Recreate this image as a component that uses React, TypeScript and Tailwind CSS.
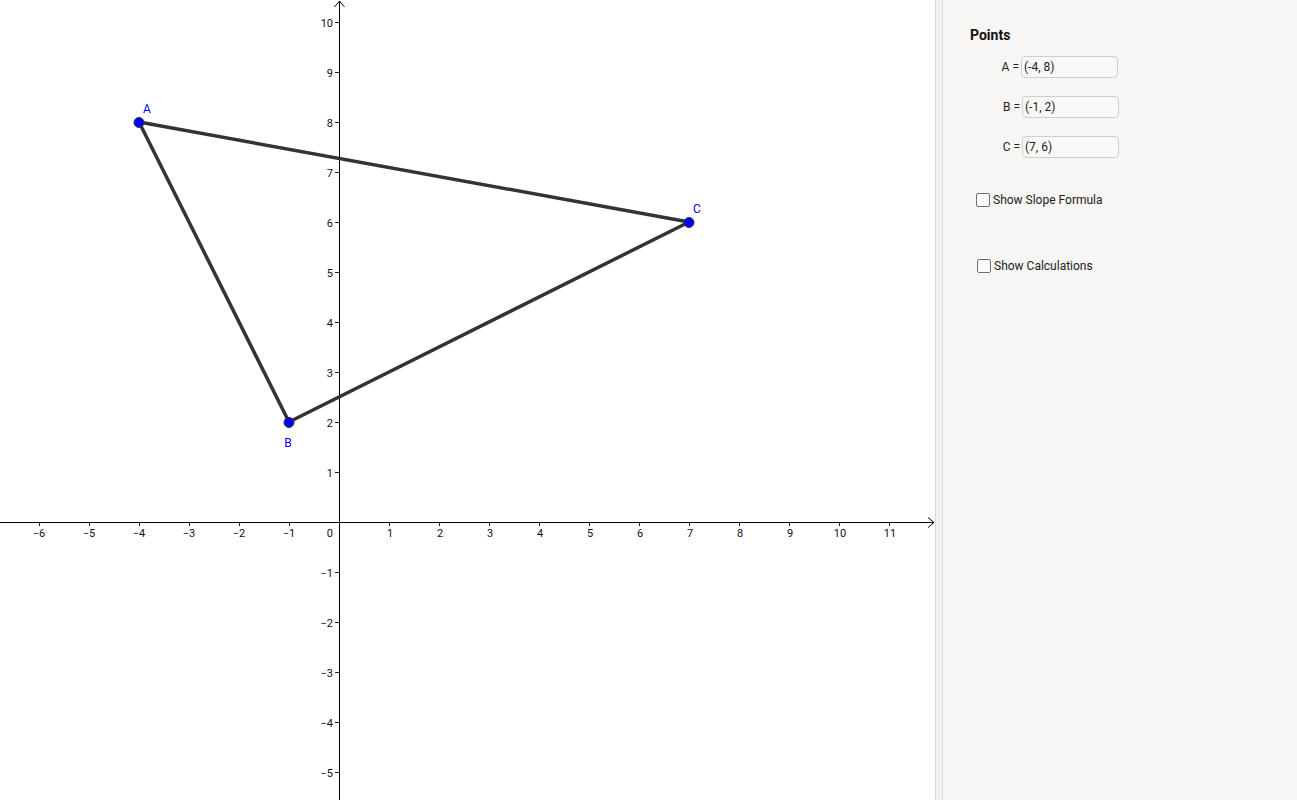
import React from "react";

const OX = 339;
const OY = 522;
const U = 50;
const px = (x: number) => OX + U * x;
const py = (y: number) => OY - U * y;

const fmt = (n: number) => (n < 0 ? "\u2212" + Math.abs(n) : String(n));

function Graph() {
  const xs: number[] = [];
  for (let i = -6; i <= 11; i++) if (i !== 0) xs.push(i);
  const ys: number[] = [];
  for (let j = -5; j <= 10; j++) if (j !== 0) ys.push(j);
  const A = [px(-4), py(8)];
  const B = [px(-1), py(2)];
  const C = [px(7), py(6)];
  return (
    <svg width={935} height={800} viewBox="0 0 935 800" className="block">
      <line x1={0} y1={OY + 0.5} x2={934} y2={OY + 0.5} stroke="#000" strokeWidth={1} />
      <polyline points="928,517.5 934,522.5 928,527.5" fill="none" stroke="#000" strokeWidth={1} />
      <line x1={OX + 0.5} y1={1} x2={OX + 0.5} y2={800} stroke="#000" strokeWidth={1} />
      <polyline points="334.5,7 339.5,1 344.5,7" fill="none" stroke="#000" strokeWidth={1} />
      {xs.map((i) => (
        <g key={"x" + i}>
          <line x1={px(i) + 0.5} y1={OY} x2={px(i) + 0.5} y2={OY + 4} stroke="#222" strokeWidth={1} />
          <text
            x={px(i) + (i < 0 ? 0 : 1)}
            y={OY + 15}
            textAnchor="middle"
            fontSize={11}
            fontFamily="Roboto, 'Liberation Sans', sans-serif"
            fill="#111"
          >
            {fmt(i)}
          </text>
        </g>
      ))}
      <text x={333} y={OY + 15} textAnchor="end" fontSize={11} fontFamily="Roboto, 'Liberation Sans', sans-serif" fill="#111">
        0
      </text>
      {ys.map((j) => (
        <g key={"y" + j}>
          <line x1={OX - 4} y1={py(j) + 0.5} x2={OX} y2={py(j) + 0.5} stroke="#222" strokeWidth={1} />
          <text
            x={333}
            y={py(j) + 4.5}
            textAnchor="end"
            fontSize={11}
            fontFamily="Roboto, 'Liberation Sans', sans-serif"
            fill="#111"
          >
            {fmt(j)}
          </text>
        </g>
      ))}
      <polygon
        points={`${A[0]},${A[1]} ${B[0]},${B[1]} ${C[0]},${C[1]}`}
        fill="none"
        stroke="#333333"
        strokeWidth={3.5}
        strokeLinejoin="round"
      />
      {[A, B, C].map((p, k) => (
        <circle key={k} cx={p[0]} cy={p[1] + 0.5} r={5} fill="#0000ff" stroke="#333" strokeWidth={1} />
      ))}
      <text x={147} y={112.5} textAnchor="middle" fontSize={12} fontFamily="Roboto, 'Liberation Sans', sans-serif" fill="#0000ff">
        A
      </text>
      <text x={288} y={446.5} textAnchor="middle" fontSize={12} fontFamily="Roboto, 'Liberation Sans', sans-serif" fill="#0000ff">
        B
      </text>
      <text x={697} y={212.5} textAnchor="middle" fontSize={12} fontFamily="Roboto, 'Liberation Sans', sans-serif" fill="#0000ff">
        C
      </text>
    </svg>
  );
}

function PointRow({ name, value, mt }: { name: string; value: string; mt: string }) {
  return (
    <div className={`flex items-center ${mt}`}>
      <div className="w-[51px] text-right pr-[2px] text-[12px] text-[#222] leading-none">{name} =</div>
      <div className="w-[97px] h-[22px] rounded-[4px] border border-[#cfcfcf] bg-[#f8f8f7] flex items-center pl-[2px] text-[12px] text-[#222]">
        {value}
      </div>
    </div>
  );
}

function Check({ label, ml, mt }: { label: string; ml: string; mt: string }) {
  return (
    <div className={`flex items-center h-[20px] ${ml} ${mt}`}>
      <div className="w-[14px] h-[14px] border border-[#6f6f6f] rounded-[2px] bg-[#fafafa]" />
      <span className="ml-[3px] text-[12px] text-[#222]">{label}</span>
    </div>
  );
}

export default function App() {
  return (
    <div className="flex w-[1297px] h-[800px] overflow-hidden bg-white" style={{ fontFamily: "Roboto, 'Liberation Sans', sans-serif" }}>
      <div className="w-[935px] h-full bg-white shrink-0">
        <Graph />
      </div>
      <div className="w-px h-full bg-[#d6d6d6] shrink-0" />
      <div className="w-[6px] h-full bg-[#f2f2f2] shrink-0" />
      <div className="w-px h-full bg-[#dedede] shrink-0" />
      <div className="flex-1 h-full bg-[#f7f6f4] pl-[27px]">
        <div className="flex flex-col">
          <div className="mt-[25px] h-[20px] leading-[20px] text-[14px] font-bold text-[#111]">Points</div>
          <PointRow name="A" value="(-4, 8)" mt="mt-[11px]" />
          <div className="pl-px">
            <PointRow name="B" value="(-1, 2)" mt="mt-[18px]" />
            <PointRow name="C" value="(7, 6)" mt="mt-[18px]" />
          </div>
          <Check label="Show Slope Formula" ml="ml-[6px]" mt="mt-[32px]" />
          <Check label="Show Calculations" ml="ml-[7px]" mt="mt-[46px]" />
        </div>
      </div>
    </div>
  );
}
